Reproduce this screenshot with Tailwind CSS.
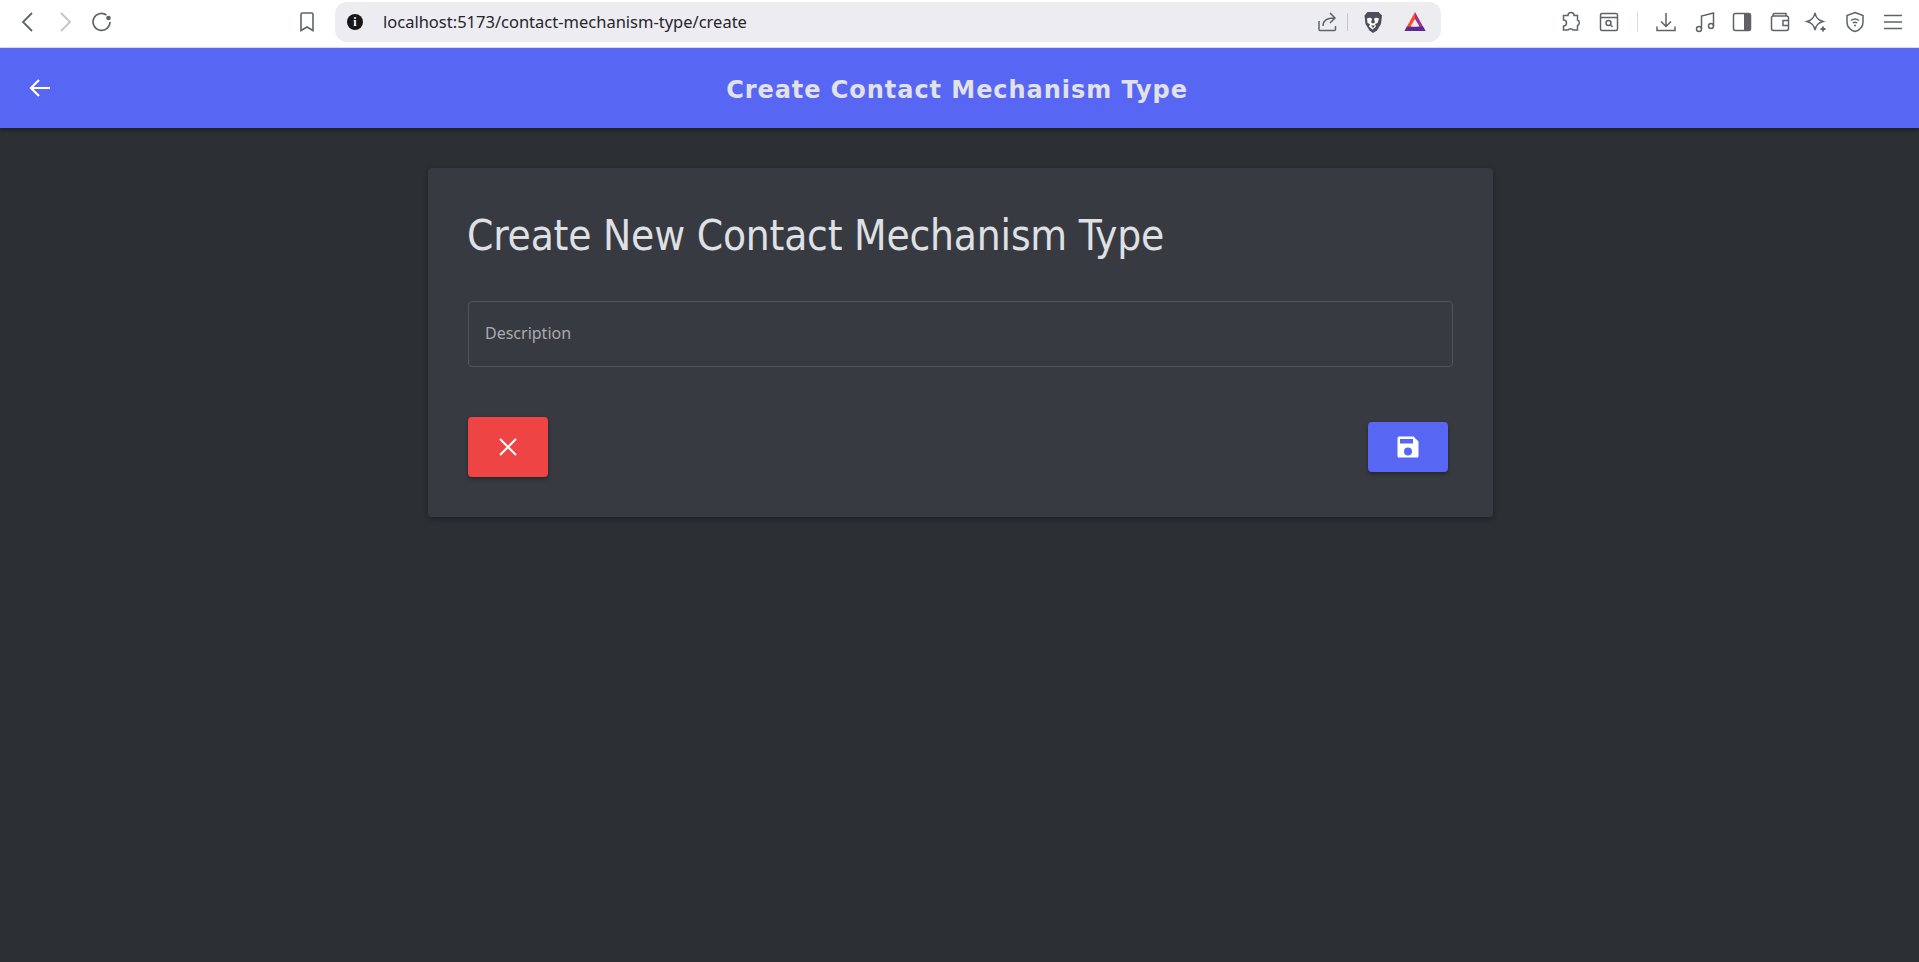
<!DOCTYPE html>
<html lang="en">
<head>
  <meta charset="UTF-8" />
  <title>Create Contact Mechanism Type</title>
  <script src="https://cdn.jsdelivr.net/npm/@tailwindcss/browser@4"></script>
</head>
<body class="h-[962px] w-[1919px] overflow-hidden bg-[#2c2f33] font-['Noto_Sans',sans-serif]">

  <!-- browser toolbar -->
  <div class="flex h-[48px] items-center border-b border-[#e4e4ec] bg-white pb-[3px]">
    <svg class="ml-[16px] h-6 w-6 text-[#5f6368]" fill="none" stroke="currentColor" stroke-width="1.8" viewBox="0 0 24 24"><path d="M16 3 7 12l9 9"/></svg>
    <svg class="ml-[13px] h-6 w-6 text-[#c4c4c8]" fill="none" stroke="currentColor" stroke-width="1.8" viewBox="0 0 24 24"><path d="m8 3 9 9-9 9"/></svg>
    <svg class="ml-[13px] h-6 w-6 text-[#5f6368]" fill="none" stroke="currentColor" stroke-width="1.6" viewBox="0 0 24 24"><path d="M20 12a8.500 8.500 0 1 1-3.500-7"/><circle cx="18.500" cy="8" r="2.300" fill="currentColor" stroke="none"/></svg>
    <svg class="ml-[181px] h-6 w-6 text-[#5f6368]" fill="none" stroke="currentColor" stroke-width="1.6" viewBox="0 0 24 24"><path d="M6 4.500A1.500 1.500 0 0 1 7.500 3h9A1.500 1.500 0 0 1 18 4.500V20.500l-6-3.500-6 3.500z"/></svg>

    <!-- url bar -->
    <div class="ml-[16px] flex h-10 w-[1106px] items-center rounded-xl bg-[#edecf1]">
      <span class="ml-[12px] flex h-4 w-4 items-center justify-center rounded-full bg-[#17171a] font-['Liberation_Serif',serif] text-[12px] font-bold text-white">i</span>
      <span class="ml-[20px] text-[16.5px] text-[#26262b]">localhost:5173/contact-mechanism-type/create</span>
      <svg class="ml-auto h-6 w-6 text-[#5f6368]" fill="none" stroke="currentColor" stroke-width="1.5" viewBox="0 0 24 24"><path d="M4 11v8.500a1 1 0 0 0 1 1h14.500a1 1 0 0 0 1-1V16M8 16c0-5 4-8 11-8M15 3l5 5-5 5"/></svg>
      <span class="ml-[8px] h-[18px] w-px bg-[#c6c6cc]"></span>
      <svg class="ml-[13px] h-6 w-6" viewBox="0 0 24 24"><path fill="#4d4d5c" d="M6.500 2h11l3.500 3.500-1 8.500-4 6.500L12 23l-3.500-2.500-4-6.500-1-8.500z"/><path fill="#fff" d="M6 8.500c2-1 4-1 5 .5l-1 3.500 2 1 2-1-1-3.500c1-1.500 3-1.500 5-.5l-1.500 4.500-2.500 1 1 2.500-3.500 3-3.500-3 1-2.500-2.500-1z"/><path fill="#4d4d5c" d="M10 15.500h4L12 18z"/></svg>
      <svg class="ml-[18px] mr-[14px] h-6 w-6" viewBox="0 0 24 24"><path fill="#ff4a24" d="M12 2 1.500 21H7l5-9z"/><path fill="#a32e8c" d="M12 2 22.500 21H17l-5-9z"/><path fill="#5c2a8e" d="M1.500 21h21L20 16.500H4z"/><path fill="#edecf1" d="M12 9 7.500 16.500h9z"/></svg>
    </div>

    <!-- extensions -->
    <svg class="ml-[118px] h-6 w-6 text-[#5f6368]" fill="none" stroke="currentColor" stroke-width="1.5" viewBox="0 0 24 24"><path d="M9 5.500a3 3 0 0 1 6 0h3.500v4.500a3 3 0 0 1 0 5.500v4.500h-4.500a3 3 0 0 0-5 0H4.500v-4a3 3 0 0 0 0-6V5.500z"/></svg>
    <svg class="ml-[14px] h-6 w-6 text-[#5f6368]" fill="none" stroke="currentColor" stroke-width="1.5" viewBox="0 0 24 24"><rect x="3.500" y="3.500" width="17" height="17" rx="1.500"/><path d="M3.500 7.500h17"/><circle cx="11.500" cy="13" r="2.500"/><path d="m13.500 15 2 2"/></svg>
    <span class="ml-[16px] h-[20px] w-px bg-[#dcdce0]"></span>
    <svg class="ml-[16px] h-6 w-6 text-[#5f6368]" fill="none" stroke="currentColor" stroke-width="1.5" viewBox="0 0 24 24"><path d="M12 3v13M7 11.500l5 5 5-5M3 16.500v4h18v-4"/></svg>
    <svg class="ml-[15px] h-6 w-6 text-[#5f6368]" fill="none" stroke="currentColor" stroke-width="1.5" viewBox="0 0 24 24"><circle cx="6" cy="19" r="2.500"/><circle cx="18" cy="16" r="2.500"/><path d="M8.500 19V6l12-3v13"/></svg>
    <svg class="ml-[13px] h-6 w-6 text-[#5f6368]" viewBox="0 0 24 24"><rect x="3.500" y="3.500" width="17" height="17" rx="2" fill="none" stroke="currentColor" stroke-width="1.500"/><rect x="14" y="3.500" width="6.500" height="17" fill="currentColor"/></svg>
    <svg class="ml-[14px] h-6 w-6 text-[#5f6368]" fill="none" stroke="currentColor" stroke-width="1.5" viewBox="0 0 24 24"><rect x="3.500" y="6" width="17" height="14.500" rx="2"/><path d="M5 6V5a1.500 1.500 0 0 1 1.500-1.500H18V6M20.500 10.500H15v5h5.500"/></svg>
    <svg class="ml-[12px] h-6 w-6 text-[#5f6368]" fill="none" stroke="currentColor" stroke-width="1.5" viewBox="0 0 24 24"><path d="M11 3c1 5 3 7 8 8.500-5 1.500-7 3.500-8 8.500-1-5-3-7-8-8.500C8 10 10 8 11 3z"/><path d="M19 16.500v5M16.500 19h5" stroke-width="1.800"/></svg>
    <svg class="ml-[15px] h-6 w-6 text-[#5f6368]" fill="none" stroke="currentColor" stroke-width="1.5" viewBox="0 0 24 24"><path d="M12 2.500 20 5.500V12c0 4.500-3 8-8 9.500C7 20 4 16.500 4 12V5.500z"/><path d="M8 10.500c2.500-2 5.500-2 8 0M9.800 13c1.400-1 3-1 4.400 0"/><circle cx="12" cy="15.500" r="1" fill="currentColor" stroke="none"/></svg>
    <svg class="ml-[14px] h-6 w-6 text-[#5f6368]" fill="none" stroke="currentColor" stroke-width="1.6" viewBox="0 0 24 24"><path d="M3 5.500h18M3 12h18M3 18.500h18"/></svg>
  </div>

  <!-- app bar -->
  <header class="relative flex h-20 items-center justify-center bg-[#5767f4] pt-[3px] shadow-[0_2px_4px_rgba(0,0,0,0.35)]">
    <svg class="absolute left-[28px] top-[28px] h-[24px] w-[24px] text-white" fill="none" stroke="currentColor" stroke-width="2.200" viewBox="0 0 24 24"><path d="M22 12H3M11 4l-8 8 8 8"/></svg>
    <h1 class="ml-[-5px] font-['DejaVu_Sans',sans-serif] text-[24px] font-bold tracking-[0.95px] text-[#e2e2e6]">Create Contact Mechanism Type</h1>
  </header>

  <main class="pt-10">
    <div class="ml-[428px] w-[1065px] rounded bg-[#383a42] p-10 shadow-[0_2px_6px_rgba(0,0,0,0.3)]">
      <h2 class="ml-[-1px] font-['DejaVu_Sans_Condensed','DejaVu_Sans',sans-serif] text-[42px] leading-[56px] tracking-[-0.2px] text-[#dfe0e3]">Create New Contact Mechanism Type</h2>

      <div class="mt-[37px] flex h-[66px] items-center rounded border border-[#52545d] pb-[2px] pl-[16px] text-[16px] text-[#a9aaae]">Description</div>

      <div class="mt-[50px] flex items-center justify-between pr-[5px]">
        <button class="flex h-[60px] w-20 items-center justify-center rounded bg-[#ef4444] text-white shadow-[0_2px_4px_rgba(0,0,0,0.35)]">
          <svg class="h-6 w-6" fill="none" stroke="currentColor" stroke-width="2" viewBox="0 0 24 24"><path d="M4 4l16 16M20 4 4 20"/></svg>
        </button>
        <button class="flex h-[50px] w-20 items-center justify-center rounded bg-[#5767f4] text-white shadow-[0_2px_4px_rgba(0,0,0,0.35)]">
          <svg class="h-6 w-6" fill="currentColor" viewBox="0 0 24 24"><path fill-rule="evenodd" d="M1.500 3A1.500 1.500 0 0 1 3 1.500h14.500l5 5V21a1.500 1.500 0 0 1-1.500 1.500H3A1.500 1.500 0 0 1 1.500 21zM4 4v4.500h13V4zM12 12.500a4 4 0 1 0 0 8 4 4 0 0 0 0-8z"/></svg>
        </button>
      </div>
    </div>
  </main>
</body>
</html>
